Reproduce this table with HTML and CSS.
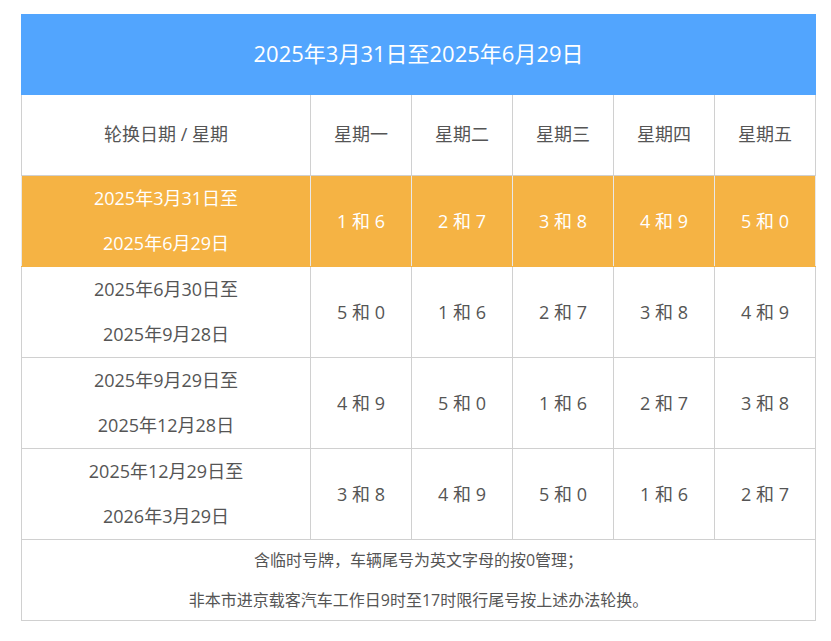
FILE: index.html
```html
<!DOCTYPE html>
<html lang="zh-CN">
<head>
<meta charset="utf-8">
<link rel="stylesheet" href="styles.css">
</head>
<body>
<div class="wrap">
<table class="rot">
<colgroup>
<col class="c-date"><col class="c-day"><col class="c-day"><col class="c-day"><col class="c-day"><col class="c-day">
</colgroup>
<thead>
<tr><th class="title" colspan="6">2025年3月31日至2025年6月29日</th></tr>
<tr class="head"><th>轮换日期 / 星期</th><th>星期一</th><th>星期二</th><th>星期三</th><th>星期四</th><th>星期五</th></tr>
</thead>
<tbody>
<tr class="cur"><td>2025年3月31日至<br>2025年6月29日</td><td>1 和 6</td><td>2 和 7</td><td>3 和 8</td><td>4 和 9</td><td>5 和 0</td></tr>
<tr><td>2025年6月30日至<br>2025年9月28日</td><td>5 和 0</td><td>1 和 6</td><td>2 和 7</td><td>3 和 8</td><td>4 和 9</td></tr>
<tr><td>2025年9月29日至<br>2025年12月28日</td><td>4 和 9</td><td>5 和 0</td><td>1 和 6</td><td>2 和 7</td><td>3 和 8</td></tr>
<tr><td>2025年12月29日至<br>2026年3月29日</td><td>3 和 8</td><td>4 和 9</td><td>5 和 0</td><td>1 和 6</td><td>2 和 7</td></tr>
<tr class="note"><td colspan="6">含临时号牌，车辆尾号为英文字母的按0管理；<br>非本市进京载客汽车工作日9时至17时限行尾号按上述办法轮换。</td></tr>
</tbody>
</table>
</div>
</body>
</html>
```
FILE: styles.css
```css
html, body { margin: 0; padding: 0; background: #fff; }
body { font-family: "Open Sans", "Noto Sans CJK SC", sans-serif; color: #555; }
.wrap { padding: 14px 0 0 21px; }
.rot { border-collapse: collapse; width: 795px; table-layout: fixed; }
.c-date { width: 289px; }
.c-day { width: 101px; }
.rot th, .rot td { border: 1px solid #d0d0d0; text-align: center; padding: 0; font-weight: normal; }
.rot .title { background: #52a5fe; color: #fff; font-size: 22px; height: 75px; line-height: 30px; padding-bottom: 4px; border-color: #52a5fe; }
.head th { height: 80px; font-size: 18px; line-height: 24px; padding-bottom: 2px; height: 78px; color: #555; }
.rot tbody td { height: 90px; font-size: 18px; line-height: 45px; color: #555; }
.rot tbody tr.cur td { background: #f5b344; color: #fff; border-color: #f5b344; border-left-color: #e8e8e8; border-right-color: #e8e8e8; }
.rot tbody tr.note td { height: 80px; font-size: 16px; line-height: 40px; color: #555; }
```
